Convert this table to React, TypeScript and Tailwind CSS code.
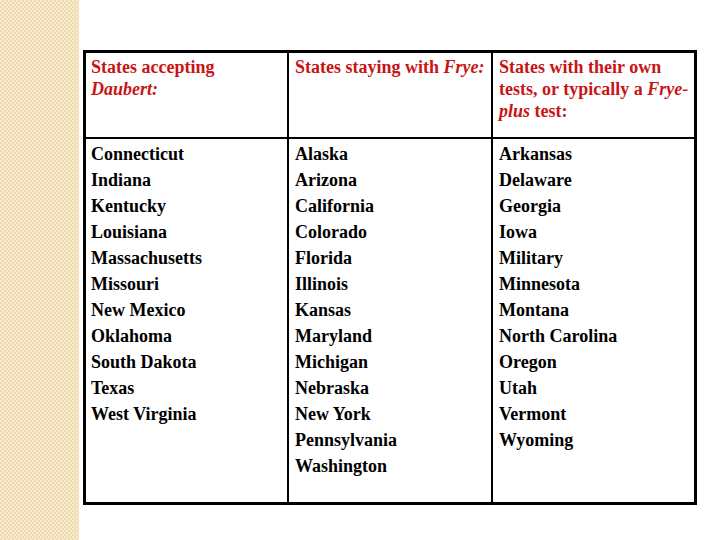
const accepting = [
  "Connecticut",
  "Indiana",
  "Kentucky",
  "Louisiana",
  "Massachusetts",
  "Missouri",
  "New Mexico",
  "Oklahoma",
  "South Dakota",
  "Texas",
  "West Virginia",
];

const staying = [
  "Alaska",
  "Arizona",
  "California",
  "Colorado",
  "Florida",
  "Illinois",
  "Kansas",
  "Maryland",
  "Michigan",
  "Nebraska",
  "New York",
  "Pennsylvania",
  "Washington",
];

const ownTests = [
  "Arkansas",
  "Delaware",
  "Georgia",
  "Iowa",
  "Military",
  "Minnesota",
  "Montana",
  "North Carolina",
  "Oregon",
  "Utah",
  "Vermont",
  "Wyoming",
];

const StateList = ({ items }: { items: string[] }) => (
  <ul className="pt-[2px]">
    {items.map((s) => (
      <li key={s} className="leading-[26px] whitespace-nowrap">
        {s}
      </li>
    ))}
  </ul>
);

export default function App() {
  return (
    <main className="flex w-[720px] h-[540px] bg-white overflow-hidden font-['Liberation_Serif',serif] font-bold text-[18px] text-black">
      <div className="w-[79px] h-full shrink-0 bg-[#f3e4c1] bg-[image:repeating-conic-gradient(#eed9ad_0_25%,#f8ecd2_0_50%)] bg-[length:4px_4px]" />

      <div className="ml-[4px] mt-[50px] w-[614px] h-[455px] border-[3px] border-black flex flex-col">
        <div className="flex h-[86px] border-b-2 border-black text-[#c81414] leading-[22px]">
          <div className="w-[203px] border-r-2 border-black pl-[5px] pt-[3px]">
            States accepting
            <br />
            <i>Daubert:</i>
          </div>
          <div className="w-[204px] border-r-2 border-black pl-[6px] pt-[3px] whitespace-nowrap">
            States staying with <i>Frye:</i>
          </div>
          <div className="flex-1 pl-[6px] pt-[3px] whitespace-nowrap">
            States with their own
            <br />
            tests, or typically a <i>Frye-</i>
            <br />
            <i>plus</i> test:
          </div>
        </div>

        <div className="flex flex-1">
          <div className="w-[203px] border-r-2 border-black pl-[5px]">
            <StateList items={accepting} />
          </div>
          <div className="w-[204px] border-r-2 border-black pl-[6px]">
            <StateList items={staying} />
          </div>
          <div className="flex-1 pl-[6px]">
            <StateList items={ownTests} />
          </div>
        </div>
      </div>
    </main>
  );
}
